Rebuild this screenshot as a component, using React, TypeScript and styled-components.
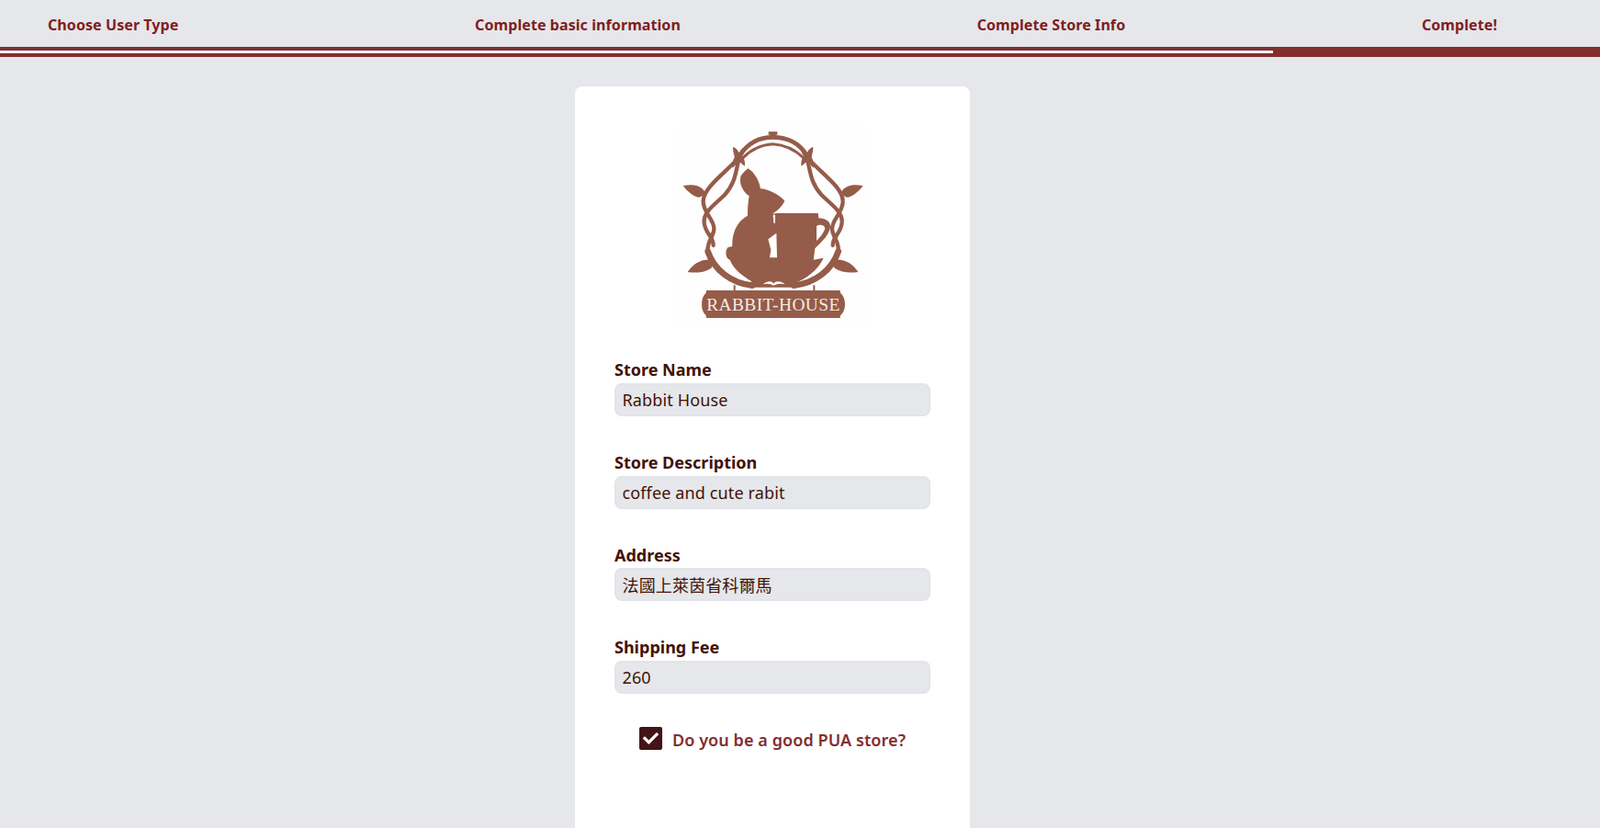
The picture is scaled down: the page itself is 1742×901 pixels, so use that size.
import React from "react"
import styled, { createGlobalStyle } from "styled-components"
import { FaCheck } from "react-icons/fa"

const GlobalStyle = createGlobalStyle`
    html, body {
        margin: 0;
        padding: 0;
        background-color: #e5e7eb;
        font-family: "Noto Sans", "Noto Sans CJK TC", sans-serif;
    }
    html { overflow: hidden; }
`

const Steps = styled.header`
    display: flex;
    justify-content: space-between;
    align-items: center;
    height: 51px;
    padding: 3px 112px 0 52px;
    box-sizing: border-box;
`

const Step = styled.span`
    font-size: 16px;
    font-weight: 700;
    letter-spacing: 0.08px;
    color: #7f1d1d;
`

const ProgressTrack = styled.div`
    height: 11px;
    padding: 4px 0;
    box-sizing: border-box;
    background-color: #822d2d;
`

const ProgressFill = styled.div`
    height: 3px;
    background-color: #f4f4f6;
`

const Main = styled.main`
    display: flex;
    justify-content: center;
    padding: 32px 60px 0 0;
`

const Card = styled.section`
    width: 430px;
    min-height: 900px;
    padding: 43px 43px 60px;
    box-sizing: border-box;
    background-color: #fff;
    border-radius: 8px 8px 0 0;
`

const LogoBox = styled.div`
    width: 215px;
    height: 215px;
    margin: 0 auto 40.34px;
    border-radius: 8px;
    background-color: #fefefe;
`

const Field = styled.label`
    display: block;
    margin-bottom: 40px;
`

const FieldName = styled.span`
    display: block;
    height: 24.67px;
    line-height: 20px;
    font-size: 18px;
    font-weight: 700;
    color: #431204;
`

const TextInput = styled.input`
    display: block;
    width: 100%;
    height: 36px;
    padding: 0 7px 0 6.5px;
    box-sizing: border-box;
    border: 2px solid #e2e4e9;
    border-radius: 8px;
    outline: none;
    background-color: #e5e7eb;
    font-family: "Noto Sans", "Noto Sans CJK TC", sans-serif;
    font-size: 18px;
    letter-spacing: 0.13px;
    color: #431204;
`

const CheckRow = styled.div`
    display: flex;
    justify-content: center;
    align-items: center;
    gap: 11px;
    margin-top: -4.34px;
`

const CheckBox = styled.span`
    display: flex;
    justify-content: center;
    align-items: center;
    width: 25px;
    height: 25px;
    border-radius: 2px;
    background-color: #441318;
    color: #fff;
    font-size: 17px;
`

const CheckLabel = styled.span`
    padding-top: 2px;
    font-size: 18px;
    font-weight: 600;
    letter-spacing: 0.08px;
    color: #822d2d;
`

const LOGO = "#955c49"

const Vine = ({ d, w = 13 }: { d: string; w?: number }) => (
    <path d={d} fill="none" stroke={LOGO} strokeWidth={w} strokeLinecap="round" />
)

const Logo = () => (
    <svg viewBox="40 35 645 645" width="215" height="215" role="img" aria-label="Rabbit House">
        {/* top arch */}
        <Vine d="M255 130 C285 85 325 72 362 72 C400 72 445 85 472 130" w={14} />
        <Vine d="M266 138 C295 108 330 96 362 94 C395 96 430 108 461 138" w={9} />
        <path fill={LOGO} d="M348 54 H377 V64 H372 V78 H353 V64 H348 Z" />
        {/* knots */}
        <circle cx="250" cy="134" r="13" fill={LOGO} />
        <circle cx="476" cy="134" r="13" fill={LOGO} />
        <path fill={LOGO} d="M232 104 C245 108 250 118 251 124 C256 114 264 108 272 104 C272 118 268 128 262 134 C268 140 272 148 271 166 C262 160 254 154 249 146 C246 156 240 164 231 172 C229 160 231 146 238 136 C234 126 232 116 232 104 Z" />
        <path fill={LOGO} d="M494 104 C481 108 476 118 475 124 C470 114 462 108 454 104 C454 118 458 128 464 134 C458 140 454 148 455 166 C464 160 472 154 477 146 C480 156 486 164 495 172 C497 160 495 146 488 136 C492 126 494 116 494 104 Z" />
        {/* side vines */}
        <Vine d="M248 142 C205 190 137 235 135 280 C133 318 172 340 170 372 C168 400 146 412 150 445" />
        <Vine d="M250 150 C240 190 238 225 205 260 C175 290 135 315 138 350 C140 385 168 395 168 425" />
        <Vine d="M478 142 C521 190 590 235 591 280 C593 318 554 340 556 372 C558 400 580 412 576 445" />
        <Vine d="M476 150 C486 190 488 225 521 260 C551 290 591 315 588 350 C586 385 558 395 558 425" />
        {/* leaves */}
        <path fill={LOGO} d="M69 231 C95 224 125 226 140 250 C135 262 128 268 118 268 C100 264 85 250 69 231 Z" />
        <path fill={LOGO} d="M657 231 C631 224 601 226 586 250 C591 262 598 268 608 268 C626 264 641 250 657 231 Z" />
        <path fill={LOGO} d="M84 512 C100 488 125 470 158 472 C166 482 168 492 160 500 C140 514 110 516 84 512 Z" />
        <path fill={LOGO} d="M641 512 C625 488 600 470 567 472 C559 482 557 492 565 500 C585 514 615 516 641 512 Z" />
        {/* outer ring of the bowl */}
        <Vine d="M150 445 C170 505 225 548 295 556" w={20} />
        <Vine d="M576 445 C556 505 501 548 431 556" w={20} />
        {/* rabbit, cup and bowl */}
        <path fill={LOGO} d="M281 174 C302 185 318 215 322 240 C345 240 385 260 401 280 C392 298 378 312 360 322 L376 320 L510 320 L512 336 C535 336 552 348 550 366 C546 392 520 415 500 435 L495 472 L528 466 C510 505 470 535 438 546 L432 562 L292 562 L292 542 C265 525 235 505 222 472 C208 468 205 445 215 432 L230 428 C228 385 246 345 280 328 C280 300 282 280 285 264 C266 250 250 225 258 198 C264 188 274 180 281 174 Z" />
        <path fill="#fff" d="M505 362 C515 355 535 358 532 372 C528 385 515 400 505 410 Z" />
        <path fill="#fff" d="M363 325 L370 325 L370 352 L365 352 Z" />
        <path fill="#fff" d="M374 385 L347 405 L356 440 L352 465 L376 465 Z" />
        <path fill="#fff" d="M330 552 C345 540 358 540 365 550 C372 540 388 540 402 552 C388 548 375 550 365 556 C355 550 342 548 330 552 Z" />
        {/* sign */}
        <path fill={LOGO} d="M234 555 H240 V572 H234 Z M494 555 H500 V572 H494 Z" />
        <path fill={LOGO} d="M145 572 H582 L583 580 C592 588 598 600 598 617 C598 634 592 646 583 654 L582 662 H145 L144 654 C135 646 130 634 130 617 C130 600 135 588 144 580 Z" />
        <text x="364" y="639" textAnchor="middle" fontFamily="'Liberation Serif', serif" fontSize="58" letterSpacing="1.4" fill="#f5ebe4">
            RABBIT-HOUSE
        </text>
    </svg>
)

const fields = [
    { name: "Store Name", value: "Rabbit House" },
    { name: "Store Description", value: "coffee and cute rabit" },
    { name: "Address", value: "法國上萊茵省科爾馬" },
    { name: "Shipping Fee", value: "260" },
]

const App = () => {
    return (
        <>
            <GlobalStyle />
            <Steps>
                <Step>Choose User Type</Step>
                <Step>Complete basic information</Step>
                <Step>Complete Store Info</Step>
                <Step>Complete!</Step>
            </Steps>
            <ProgressTrack>
                <ProgressFill style={{ width: "1386px" }} />
            </ProgressTrack>
            <Main>
                <Card>
                    <LogoBox>
                        <Logo />
                    </LogoBox>
                    {fields.map((field) => (
                        <Field key={field.name}>
                            <FieldName>{field.name}</FieldName>
                            <TextInput defaultValue={field.value} readOnly />
                        </Field>
                    ))}
                    <CheckRow>
                        <CheckBox>
                            <FaCheck />
                        </CheckBox>
                        <CheckLabel>Do you be a good PUA store?</CheckLabel>
                    </CheckRow>
                </Card>
            </Main>
        </>
    )
}

export default App
